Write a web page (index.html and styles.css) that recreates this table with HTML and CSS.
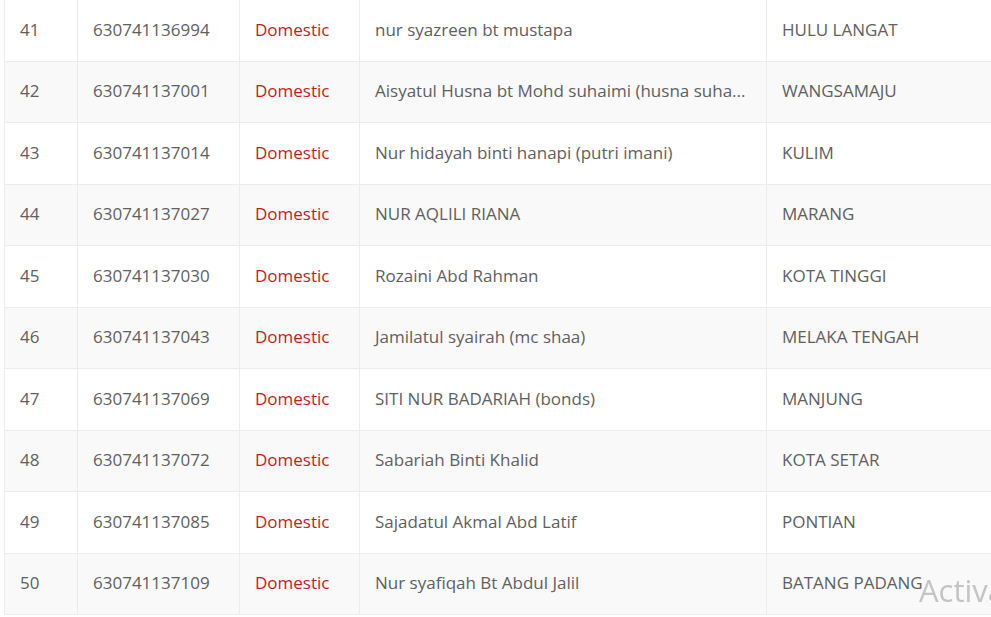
FILE: index.html
```html
<!DOCTYPE html>
<html lang="en">
<head>
    <meta charset="UTF-8">
    <title>Customer List</title>
    <link rel="stylesheet" href="styles.css">
</head>
<body>
    <div class="list">
        <table class="grid">
            <colgroup>
                <col class="c-no">
                <col class="c-id">
                <col class="c-type">
                <col class="c-name">
                <col class="c-area">
            </colgroup>
            <tbody>
                <tr><td>41</td><td>630741136994</td><td class="type">Domestic</td><td>nur syazreen bt mustapa</td><td>HULU LANGAT</td></tr>
                <tr><td>42</td><td>630741137001</td><td class="type">Domestic</td><td>Aisyatul Husna bt Mohd suhaimi (husna suha...</td><td>WANGSAMAJU</td></tr>
                <tr><td>43</td><td>630741137014</td><td class="type">Domestic</td><td>Nur hidayah binti hanapi (putri imani)</td><td>KULIM</td></tr>
                <tr><td>44</td><td>630741137027</td><td class="type">Domestic</td><td>NUR AQLILI RIANA</td><td>MARANG</td></tr>
                <tr><td>45</td><td>630741137030</td><td class="type">Domestic</td><td>Rozaini Abd Rahman</td><td>KOTA TINGGI</td></tr>
                <tr><td>46</td><td>630741137043</td><td class="type">Domestic</td><td>Jamilatul syairah (mc shaa)</td><td>MELAKA TENGAH</td></tr>
                <tr><td>47</td><td>630741137069</td><td class="type">Domestic</td><td>SITI NUR BADARIAH (bonds)</td><td>MANJUNG</td></tr>
                <tr><td>48</td><td>630741137072</td><td class="type">Domestic</td><td>Sabariah Binti Khalid</td><td>KOTA SETAR</td></tr>
                <tr><td>49</td><td>630741137085</td><td class="type">Domestic</td><td>Sajadatul Akmal Abd Latif</td><td>PONTIAN</td></tr>
                <tr><td>50</td><td>630741137109</td><td class="type">Domestic</td><td>Nur syafiqah Bt Abdul Jalil</td><td>BATANG PADANG</td></tr>
            </tbody>
        </table>
    </div>
    <div class="watermark">Activate Windows</div>
</body>
</html>
```

FILE: styles.css
```css
html, body {
    margin: 0;
    height: 100%;
    overflow: hidden;
}
body {
    background: #fff;
    font-family: "Open Sans", "Noto Sans", sans-serif;
    font-size: 17px;
    color: #606060;
}
.list {
    padding-left: 4px;
    margin-top: -1px;
}
.grid {
    width: 1100px;
    table-layout: fixed;
    border-collapse: collapse;
}
.grid .c-no { width: 73px; }
.grid .c-id { width: 162px; }
.grid .c-type { width: 120px; }
.grid .c-name { width: 407px; }
.grid td {
    height: 61.5px;
    padding: 0 0 2px 15px;
    border: 1px solid #ececec;
    white-space: nowrap;
    overflow: hidden;
    box-sizing: border-box;
}
.grid tr:nth-child(even) td {
    background: #f9f9f9;
}
.grid td.type {
    color: #c41d1d;
}
.watermark {
    position: fixed;
    left: 919px;
    top: 569px;
    font-size: 31px;
    color: rgba(160, 160, 160, 0.6);
    white-space: nowrap;
    pointer-events: none;
}
```
